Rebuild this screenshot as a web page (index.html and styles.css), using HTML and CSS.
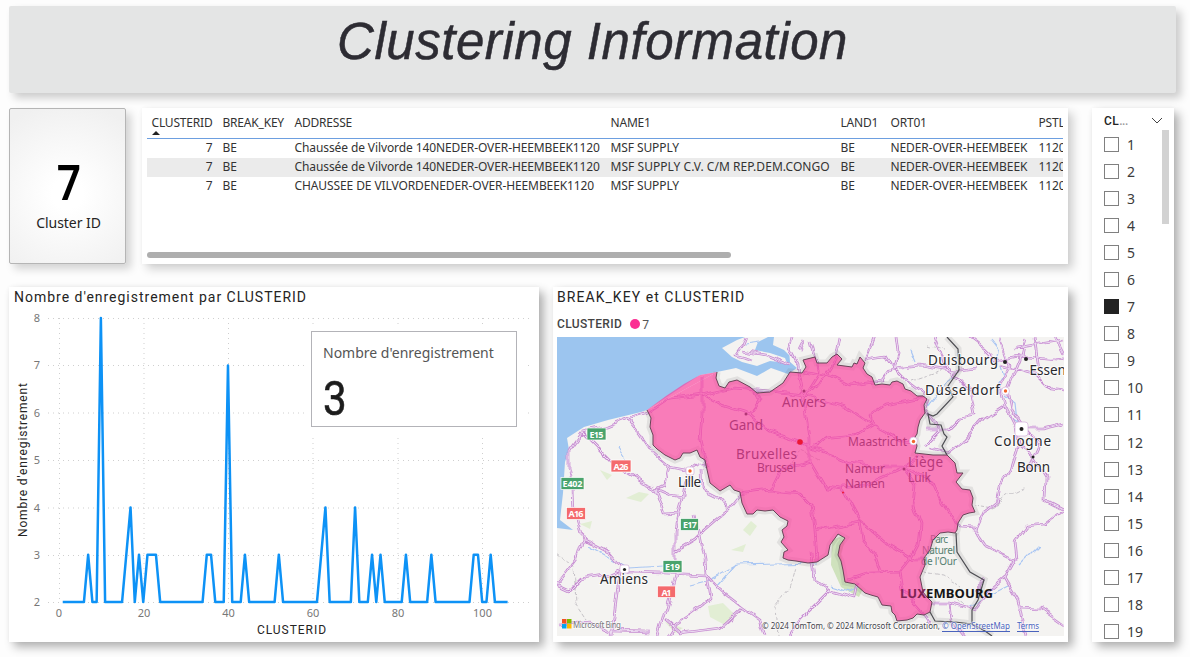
FILE: index.html
```html
<!DOCTYPE html>
<html lang="fr">
<head>
<meta charset="utf-8">
<title>Clustering Information</title>
<link rel="stylesheet" href="styles.css">
</head>
<body>
<div class="report">
  <header class="banner panel"><h1>Clustering Information</h1></header>
  <div class="body">
    <div class="main">
      <div class="top">
        <section class="card panel"><strong>7</strong><span>Cluster ID</span></section>
        <section class="table-panel panel">
          <div class="grid">
            <div class="row head"><span class="id">CLUSTERID</span><span>BREAK_KEY</span><span>ADDRESSE</span><span>NAME1</span><span>LAND1</span><span>ORT01</span><span>PSTLZ</span><i class="sort"></i></div>
            <div class="row"><span class="id">7</span><span>BE</span><span>Chaussée de Vilvorde 140NEDER-OVER-HEEMBEEK1120</span><span>MSF SUPPLY</span><span>BE</span><span>NEDER-OVER-HEEMBEEK</span><span>1120</span></div>
            <div class="row alt"><span class="id">7</span><span>BE</span><span>Chaussée de Vilvorde 140NEDER-OVER-HEEMBEEK1120</span><span class="wide">MSF SUPPLY C.V. C/M REP.DEM.CONGO</span><span>BE</span><span>NEDER-OVER-HEEMBEEK</span><span>1120</span></div>
            <div class="row"><span class="id">7</span><span>BE</span><span>CHAUSSEE DE VILVORDENEDER-OVER-HEEMBEEK1120</span><span>MSF SUPPLY</span><span>BE</span><span>NEDER-OVER-HEEMBEEK</span><span>1120</span></div>
          </div>
          <div class="hscroll"></div>
        </section>
      </div>
      <div class="bottom">
        <section class="chart-panel panel">
          <svg class="chart" viewBox="9 287 530 355" width="530" height="355">
            <text class="title" x="14" y="301.500" textLength="292">Nombre d'enregistrement par CLUSTERID</text>
            <path class="gridline" d="M48 318.5H532M48 365.5H532M48 413H532M48 460.5H532M48 508H532M48 555.500H532M48 602.500H532M59.500 318V602M144 318V602M228.500 318V602M313 318V602M398 318V602M482.500 318V602"/>
            <g class="tick">
              <text x="37" y="322">8</text><text x="37" y="369">7</text><text x="37" y="416.500">6</text><text x="37" y="464">5</text><text x="37" y="511.500">4</text><text x="37" y="559">3</text><text x="37" y="606">2</text>
              <text x="59" y="617">0</text><text x="144" y="617">20</text><text x="228.500" y="617">40</text><text x="313" y="617">60</text><text x="398" y="617">80</text><text x="482.500" y="617">100</text>
            </g>
            <polyline class="series" transform="translate(58.500 696.700) scale(4.237 -47.330)" points="1,2 6,2 7,3 8,2 9,2 10,8 11,2 15,2 17,4 18,2 19,3 20,2 21,3 23,3 24,2 34,2 35,3 36,3 37,2 39,2 40,7 41,2 43,2 44,3 45,2 51,2 52,3 53,2 61,2 63,4 64,2 69,2 70,4 71,2 73,2 74,3 75,2 76,3 77,2 81,2 82,3 83,2 87,2 88,3 89,2 97,2 98,3 99,3 100,2 101,2 102,3 103,2 106,2"/>
            <text class="axis" x="257" y="634" textLength="69">CLUSTERID</text>
            <text class="axis" transform="translate(26.500 537) rotate(-90)" textLength="154">Nombre d'enregistrement</text>
          </svg>
          <div class="kpi"><span>Nombre d'enregistrement</span><strong>3</strong></div>
        </section>
        <section class="map-panel panel">
          <h2>BREAK_KEY et CLUSTERID</h2>
          <div class="legend"><b>CLUSTERID</b><i></i><span>7</span></div>
          <svg class="map" viewBox="557 337 507 299" width="507" height="299">
            <defs>
              <filter id="bend" x="0" y="0" width="1" height="1"><feTurbulence type="fractalNoise" baseFrequency=".06" numOctaves="2" seed="4"/><feDisplacementMap in="SourceGraphic" scale="9" xChannelSelector="R" yChannelSelector="G"/></filter>
              <path id="roads" d="M557 584L570 590 580 580 610 575 623 569M557 584L568 570 577 558 583 538 575 510 574 490 569 470 569 450 582 432M582 432L608 426 628 418 647 412M628 418L640 433 655 455 668 466 690 470 700 463 706 466M582 432L605 455 620 470 640 482 656 489 662 505 665 514 678 513 683 495 686 480 692 470M656 489L670 495 684 497M668 466L664 485 656 489M678 513L675 530 675 575 668 600 658 636M583 538L595 545 610 553 620 565 628 572 665 573 706 575M620 572L616 600 612 636M675 552L695 540 705 530 720 517 729 510 742 494M702 470L703 490 717 497 727 509M695 515L700 535 705 560 706 575 720 590 742 607 760 620 765 636M706 575L710 600 690 615 675 625 668 636M665 620L680 633 720 628 742 608M557 625L590 622 610 631 650 632M812 553L815 580 830 590 855 597 858 583M830 590L815 605 800 620 790 636M647 412L665 400 702 395 720 405 750 414 770 432 800 442 812 448 850 463 880 467 905 467M702 375L702 415 700 440 706 465M702 395L735 388 790 393 803 395 845 407 872 425 900 440 915 441M750 414L760 400 755 390M803 395L798 365 790 350 793 337M800 375L803 395 808 420 810 440 810 462 825 487 843 489 860 520 890 545 915 560 925 560M811 462L780 470 770 490 740 494M770 490L800 493 812 505 815 530 817 560M815 530L860 522M843 487L865 485 903 468 920 455M903 468L915 485 913 505 920 525 918 545 910 560 900 572 870 573 848 580M903 468L935 485 943 503 956 520 960 528 974 529 985 545 1015 560 1005 578 1018 600 1025 636M860 522L863 540 875 555 880 570M900 572L903 590 925 615 932 625M743 351L765 355 790 365M745 337L742 345 735 355 753 360M803 395L820 385 835 362 840 337M803 400L820 373 811 340M872 425L870 415 885 405 925 398M872 425L855 435 825 438 815 447M803 370L830 375 850 385 883 381 893 368 920 365 955 371 975 368M893 368L905 380 925 395M893 368L885 355 867 358 875 337M893 368L898 352 896 337M800 350L805 340M935 337L945 365 955 375 970 390 975 415 960 418 948 430 925 430M968 337L985 350 995 360 1020 355M1000 337L1010 365 1000 385 1005 405 1015 425 1018 445 1010 470 1000 485 998 500 983 512 975 530M1005 405L985 418 965 440 948 453 930 448M1025 337L1020 360 1008 390 1012 410 1024 428M1020 355L1064 360M1015 348L1064 340M1035 337L1040 370M1055 337L1064 355M1020 428L1043 428 1064 423M1018 445L1035 460 1046 478 1045 500 1064 510M1029 470L1040 445 1025 430M1064 510L1045 525 1025 527 1015 540 1017 560M1018 607L1040 608 1064 625M1005 577L990 590 975 610 950 603 932 603M950 603L952 620 965 636M974 590L984 579M925 445L940 430 925 410 928 400M1000 365L1035 375 1050 390 1064 392"/>
              <path id="be-land" d="M717 372L716 378 719 386 725 388 729 382 737 380 750 387 757 393 770 392 783 383 790 372 802 373 806 367 803 360 815 357 817 363 827 363 832 357 837 354 842 359 837 365 852 367 854 363 857 364 860 357 865 363 863 368 867 374 872 377 875 385 882 384 890 385 892 382 897 381 903 384 905 389 911 391 917 396 923 396 927 399 924 405 925 413 920 420 918 427 917 434 915 437 917 446 915 453 924 454 933 455 947 455 955 463 957 473 963 473 956 482 962 489 970 490 973 498 972 505 975 512 969 513 963 515 958 523 957 530 955 533 948 532 940 533 933 540 930 550 924 558 925 565 920 577 923 592 927 597 932 602 930 612 924 615 917 614 913 618 907 620 897 621 895 615 892 612 891 606 882 605 878 597 871 595 865 593 855 584 845 582 843 570 841 561 838 555 840 545 845 538 838 534 830 545 828 555 817 562 808 563 796 561 788 560 783 558 784 552 788 550 781 542 784 537 782 530 787 526 788 521 780 517 773 510 765 511 757 510 753 514 747 514 742 503 740 492 734 490 730 485 720 491 710 483 706 465 705 460 700 457 697 450 690 453 683 453 680 458 675 460 665 455 657 449 653 445 653 435 650 427 651 418 647 410"/>
              <path id="border" d="M947 337L958 349 959 370 948 386 953 397 937 414 933 416 928 414 930 424 941 425 944 434 947 437 942 446 947 455M956 533L957 552 970 572 984 580 981 590 978 600 972 610 972 624 985 631 992 636M930 612L935 621 955 622 972 624"/>
            </defs>
            <rect class="land" x="557" y="337" width="507" height="299"/>
            <g class="park"><path d="M743 530l8-9 6 5-7 10zM708 606l15-3 12 12-10 10-15-8zM731 550l15-6-3 8zM580 524l12-3-2 8zM626 498l13-6 10 2-8 8zM665 622l18 6-8 5zM600 470l12 5-5 5z"/><path class="deep" d="M832 540l10-4 3 4-4 14 4 26 18 9-4 8-18-10-10-22z"/></g>
            <path class="sea" d="M557 337H783L789 350 790 362 797 368 788 374 771 368 757 376 736 368 717 372 700 375 647 410 641 412 608 420 584 427 567 438 569 450 565 462 563 493 560 520 573 530 557 528Z"/>
            <path class="land" d="M722 348L737 340 745 337 768 337 758 342 755 350 770 353 785 358 787 363 770 361 757 366 742 362 732 357ZM774 337H790L792 358 784 350 773 345Z"/>
            <g filter="url(#bend)">
              <rect class="extent" x="557" y="337" width="507" height="299"/>
              <path class="river" d="M587 545L605 555 628 568 665 566M690 585l20-5 27-15 80-2M717 587l19-22M620 447l8 12M990 340l8 10-2 12M1000 366l3 10-6 10 12 8M1005 395l10 8 2 18-8-5M830 585l20 6 10-4M911 350l5 12M1040 545l-20 20M1010 585l-20 10M744 345l15-2M953 373l-18 25-10 12M988 596l-20 12"/>
              <path class="minor" d="M557 552L574 565 576 605 586 620M794 568L788 590 776 605 778 636M927 345l20 5M912 380l30-10M973 505l18 3 15-12 20-10M922 572l20 3 20 12M940 592l25 12M820 460l-20-10-10 20"/>
              <use href="#roads" class="road-edge"/>
              <use href="#roads" class="road-core"/>
            </g>
            <use href="#be-land" class="halo"/><use href="#border" class="halo"/>
            <use href="#border" class="line"/>
            <g class="place muted">
              <text x="782" y="407" textLength="44">Anvers</text><text x="729" y="430" textLength="34">Gand</text><text x="736" y="459" textLength="61">Bruxelles</text><text class="small" x="757" y="472" textLength="39">Brussel</text>
              <text class="small" x="848" y="446" textLength="59">Maastricht</text><text class="small" x="845" y="473" textLength="40">Namur</text><text class="small" x="845" y="488" textLength="40">Namen</text><text x="908" y="467" textLength="35">Liège</text><text class="small" x="908" y="482" textLength="23">Luik</text>
              <circle cx="804" cy="391" r="1.500"/><circle cx="746" cy="414" r="1.500"/><circle cx="904" cy="469" r="1.500"/>
            </g>
            <g class="green"><text x="930" y="543" textLength="18">Parc</text><text x="922" y="554" textLength="33">Naturel</text><text x="921" y="565" textLength="36">de l'Our</text></g>
            <use href="#be-land" class="belgium"/>
            <path class="coast-fill" d="M647 410L666 396 684 384 700 375 717 372Z"/>
            <use href="#be-land" class="belgium-line"/>
            <text class="country" x="900" y="598" textLength="93"><tspan class="veiled">LUX</tspan>EMBOURG</text>
            <rect class="spot" x="1015" y="422" width="13" height="14" rx="3"/><rect class="spot" x="620" y="565" width="9" height="8" rx="2"/><rect class="spot" x="686" y="467" width="8" height="8" rx="2"/><circle class="spot" cx="1005.500" cy="391" r="4"/><circle class="spot" cx="913.500" cy="441" r="4"/>
            <g class="place">
              <text x="928" y="365" textLength="70">Duisbourg</text><text x="1029.500" y="374.500">Essen</text><text x="925" y="395" textLength="75">Düsseldorf</text><text x="994" y="446" textLength="57">Cologne</text><text x="1017" y="472" textLength="33">Bonn</text><text x="678" y="487" textLength="23">Lille</text><text x="600" y="584" textLength="48">Amiens</text>
            </g>
            <g class="dot"><circle cx="1005" cy="362" r="2"/><circle cx="1026" cy="359" r="2"/><circle cx="1021.500" cy="429" r="2"/><circle cx="1033" cy="457" r="1.500"/><circle cx="624.500" cy="569.500" r="1.600"/></g>
            <g class="reddot"><circle cx="800" cy="442" r="2.800"/><circle cx="843" cy="492.500" r="1"/></g>
            <g class="orangedot"><circle cx="1005.500" cy="391" r="1.700"/><circle cx="690" cy="471" r="1.700"/><circle cx="913.500" cy="441.500" r="1.700"/></g>
            <g class="shield">
              <rect class="e" x="587" y="428" width="19" height="12"/><text x="596.500" y="437.500" textLength="14">E15</text>
              <rect class="a" x="611" y="460" width="20" height="12"/><text x="621" y="469.500" textLength="15">A26</text>
              <rect class="e" x="561" y="477.500" width="23" height="12"/><text x="572.500" y="487" textLength="20">E402</text>
              <rect class="a" x="566.500" y="507.500" width="19" height="12"/><text x="576" y="517" textLength="15">A16</text>
              <rect class="e" x="680.500" y="518.500" width="18" height="12"/><text x="690" y="528" textLength="14">E17</text>
              <rect class="e" x="663" y="560.500" width="19" height="12"/><text x="672.500" y="570" textLength="15">E19</text>
              <rect class="a" x="657.500" y="586" width="18" height="11.500"/><text x="666.500" y="595.500" textLength="10">A1</text>
            </g>
            <g class="credits">
              <path fill="#f25022" d="M562 619h4.500v4.500H562z"/><path fill="#7fba00" d="M567 619h4.500v4.500H567z"/><path fill="#00a4ef" d="M562 624h4.500v4.500H562z"/><path fill="#ffb900" d="M567 624h4.500v4.500H567z"/>
              <text class="bing" x="573" y="627.500" textLength="48">Microsoft Bing</text>
              <text x="762" y="629" textLength="178">© 2024 TomTom, © 2024 Microsoft Corporation,</text>
              <text class="link" x="942" y="629" textLength="68">© OpenStreetMap</text><text class="link" x="1017" y="629" textLength="22">Terms</text><path class="underline" d="M942 631.500H1010M1017 631.500H1039"/>
            </g>
          </svg>
        </section>
      </div>
    </div>
    <aside class="slicer panel">
      <div class="slicer-head"><b>CL<span>...</span></b><svg width="12" height="8" viewBox="0 0 12 8"><path d="M1 1l5 5 5-5"/></svg></div>
      <div class="slicer-body">
        <ul>
          <li><i></i>1</li><li><i></i>2</li><li><i></i>3</li><li><i></i>4</li><li><i></i>5</li><li><i></i>6</li><li class="on"><i></i>7</li><li><i></i>8</li><li><i></i>9</li><li><i></i>10</li><li><i></i>11</li><li><i></i>12</li><li><i></i>13</li><li><i></i>14</li><li><i></i>15</li><li><i></i>16</li><li><i></i>17</li><li><i></i>18</li><li><i></i>19</li>
        </ul>
        <div class="vscroll"></div>
      </div>
    </aside>
  </div>
</div>
</body>
</html>
```
FILE: styles.css
```css
* { box-sizing: border-box; }
body { margin: 0; background: #fdfdfd; font-family: "Noto Sans", "Open Sans", sans-serif; color: #252423; }
.report { width: 1190px; height: 657px; padding: 6px 14px 15px 9px; overflow: hidden; display: flex; flex-direction: column; gap: 15px; }
.panel { background: #fff; box-shadow: 5px 5px 9px rgba(0,0,0,.3), 0 0 4px rgba(0,0,0,.04); }
.banner { height: 87px; flex: none; background: #e4e5e5; border-radius: 2px; box-shadow: 5px 5px 9px rgba(0,0,0,.2); text-align: center; }
.banner h1 { margin: 0; padding-top: 8px; font: italic 400 51px/56px "Liberation Sans", Arial, sans-serif; color: #2d2c33; letter-spacing: .55px; -webkit-text-stroke: .5px #2d2c33; }
.body { display: flex; gap: 24px; height: 534px; }
.main { width: 1059px; display: flex; flex-direction: column; gap: 23px; }
.top { display: flex; gap: 16px; height: 156px; }
.card { width: 117px; border: 1px solid #b5b5b5; border-radius: 2px; background: radial-gradient(circle at 50% 55%, #fff 15%, #f0f0f0 90%); display: flex; flex-direction: column; align-items: center; padding: 44px 0 0 2px; box-shadow: 5px 5px 9px rgba(0,0,0,.17); }
.card strong { font: 600 48px/58px "Noto Sans", sans-serif; color: #000; transform: scaleX(.88); }
.card span { font-size: 14px; line-height: 20px; letter-spacing: -.05px; padding-top: 2px; }
.table-panel { width: 926px; padding: 5px 5px 0; display: flex; flex-direction: column; justify-content: space-between; box-shadow: 5px 5px 9px rgba(0,0,0,.18), 0 0 4px rgba(0,0,0,.04); }
.grid { width: 916px; overflow: hidden; font-size: 12px; color: #333; }
.row { display: grid; grid-template-columns: 66px 72px 316px 230px 50px 148px 60px; height: 19px; line-height: 18px; padding-left: 4.500px; white-space: nowrap; letter-spacing: -.1px; }
.row > .id { text-align: right; padding-right: 5px; }
.row > span:nth-child(n+2) { padding-left: 5px; }
.row .wide { letter-spacing: .05px; }
.row.alt { background: #ebebeb; }
.head { height: 26px; line-height: 19px; border-bottom: 1px solid #6d9fe0; position: relative; }
.head > span { letter-spacing: -.2px; }
.head .id { text-align: left; padding: 0; }
.sort { position: absolute; left: 5px; bottom: 3px; border: 4px solid transparent; border-top: 0; border-bottom: 4px solid #222; }
.hscroll { width: 584px; height: 6px; border-radius: 3px; background: #aeaeae; margin: 0 0 6px; }
.bottom { display: flex; gap: 14px; height: 355px; }
.chart-panel { width: 530px; position: relative; }
.chart { display: block; }
.title { font: 14px Roboto, sans-serif; fill: #252423; }
.axis { font: 12px Roboto, sans-serif; fill: #252423; }
.tick { font-size: 11px; fill: #777; text-anchor: middle; }
.gridline { stroke: #cfcfcf; stroke-dasharray: 1 4; fill: none; }
.series { fill: none; stroke: #0d92f6; stroke-width: 2.500; vector-effect: non-scaling-stroke; stroke-linejoin: round; }
.kpi { position: absolute; left: 302px; top: 44px; width: 206px; height: 96px; border: 1px solid #b3b3b8; background: #fff; padding: 11px 11px 0; display: flex; flex-direction: column; box-shadow: 0 0 0 7px #fff; }
.kpi span { font-size: 14px; line-height: 20px; color: #555; white-space: nowrap; }
.kpi strong { font: 400 49px/50px Roboto, sans-serif; color: #1c1c1c; -webkit-text-stroke: .6px #1c1c1c; margin-top: 11px; transform: scaleX(.86); transform-origin: left; }
.map-panel { width: 515px; padding: 0 4px; }
.map-panel h2 { margin: 0; font: 14px/20px Roboto, sans-serif; letter-spacing: 1.050px; }
.legend { display: flex; align-items: center; height: 30px; padding-top: 4px; font-size: 12px; }
.legend b { font: 500 12px Roboto, sans-serif; letter-spacing: .35px; color: #444; }
.legend i { width: 10px; height: 10px; border-radius: 50%; background: #fb2f93; margin: 0 2px 0 8px; }
.legend span { color: #555; }
.map { display: block; }
.land { fill: #f4f3f1; }
.sea { fill: #9cc5ef; }
.extent { fill: none; }
.park { fill: #e2eed4; }
.park .deep { fill: #cfe2bd; }
.river { fill: none; stroke: #a9c6f3; stroke-width: 1.200; }
.minor { fill: none; stroke: #b9b5bb; stroke-width: .8; stroke-dasharray: 4 2; }
.road-edge { fill: none; stroke: #c88fd2; stroke-width: 2.700; stroke-linejoin: round; }
.road-core { fill: none; stroke: #eddcf2; stroke-width: 1; stroke-linejoin: round; }
.halo { fill: none; stroke: rgba(110,115,110,.14); stroke-width: 7; }
.line { fill: none; stroke: #4d4d52; stroke-width: 1.200; }
.belgium, .coast-fill { fill: rgba(252,62,156,.66); }
.belgium-line { fill: none; stroke: #694458; stroke-width: 1; }
.place { font-size: 13.500px; fill: #28282c; }
.place text { paint-order: stroke; stroke: rgba(255,255,255,.7); stroke-width: 2px; }
.muted text { stroke: none; fill: #303038; }
.place .small { font-size: 12px; }
.green { font-size: 10px; fill: #568071; }
.country { font-size: 13px; font-weight: 700; fill: #151515; }
.veiled { fill: #7d2453; }
.spot { fill: #fff; stroke: #cfa5d6; stroke-width: .6; }
.dot { fill: #222; }
.reddot { fill: #ec1733; }
.orangedot { fill: #f0642d; }
.shield { font-size: 9px; font-weight: 700; fill: #fff; text-anchor: middle; }
.shield rect { stroke: #fff; stroke-width: .7; }
.shield .e { fill: #49a36c; }
.shield .a { fill: #f46a6d; }
.credits { font-size: 8px; fill: #44444c; }
.credits text { paint-order: stroke; stroke: rgba(255,255,255,.6); stroke-width: 1.500px; }
.credits .bing { fill: #77777c; }
.credits .link { fill: #4a63bd; }
.underline { stroke: #4a63bd; stroke-width: 1; }
.slicer { width: 82px; padding: 0 5px 0 12px; clip-path: inset(-5px -20px -20px -5px); }
.slicer-head { height: 22px; display: flex; justify-content: space-between; align-items: center; padding: 3px 6px 0 0; }
.slicer-head b { font: 500 12px Roboto, sans-serif; letter-spacing: .4px; }
.slicer-head b span { color: #999; letter-spacing: -.4px; }
.slicer-head svg path { fill: none; stroke: #444; }
.slicer-body { display: flex; justify-content: space-between; }
.slicer ul { list-style: none; margin: 0; padding: 1px 0 0; }
.slicer li { height: 27.060px; display: flex; align-items: center; gap: 8px; font-size: 14px; color: #3c3c3c; }
.slicer li i { width: 15px; height: 15px; border: 1px solid #808080; }
.slicer li.on i { background: #222; border-color: #222; }
.vscroll { width: 7px; height: 94px; background: #d2d2d2; }
```
